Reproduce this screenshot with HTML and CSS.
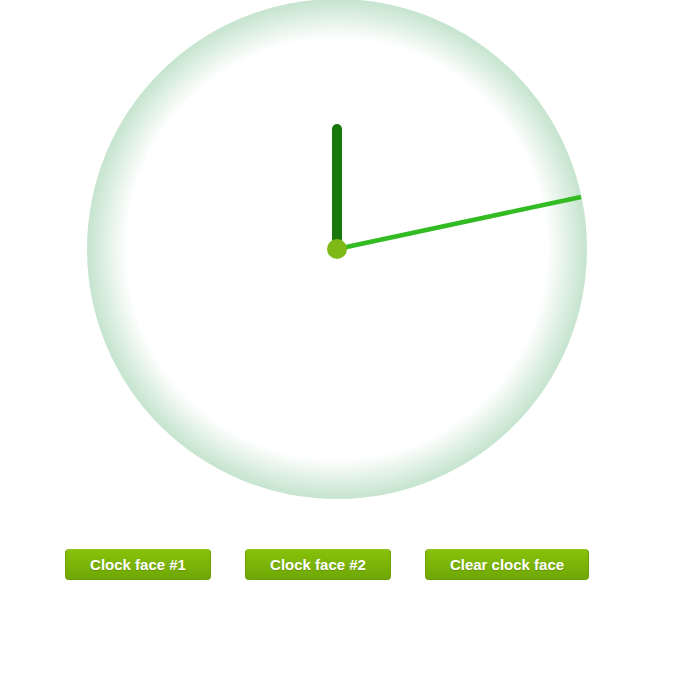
FILE: index.html
```html
<!DOCTYPE html>
<html>
<head>
<meta charset="utf-8">
<link rel="stylesheet" href="styles.css">
</head>
<body>
<div class="page">
  <div class="clock-wrap">
    <svg class="clock" width="500" height="500" viewBox="0 0 500 500">
      <defs>
        <radialGradient id="face" cx="250" cy="250" r="250" gradientUnits="userSpaceOnUse">
          <stop offset="0" stop-color="#ffffff"/>
          <stop offset="0.84" stop-color="#ffffff"/>
          <stop offset="1" stop-color="#c5e4ce"/>
        </radialGradient>
      </defs>
      <circle cx="250" cy="250" r="250" fill="url(#face)"/>
      <line x1="250" y1="250" x2="250" y2="130" stroke="#19780b" stroke-width="10" stroke-linecap="round"/>
      <line x1="250" y1="250" x2="494" y2="198" stroke="#33bb22" stroke-width="4.5"/>
      <circle cx="250" cy="250" r="10" fill="#7dba18"/>
    </svg>
  </div>
  <div class="buttons">
    <button class="btn btn-face">Clock face #1</button>
    <button class="btn btn-face">Clock face #2</button>
    <button class="btn btn-clear">Clear clock face</button>
  </div>
</div>
</body>
</html>
```
FILE: styles.css
```css
html, body {
  margin: 0;
  padding: 0;
  background: #ffffff;
  font-family: "Liberation Sans", Arial, sans-serif;
}
.page {
  width: 675px;
}
.clock-wrap {
  display: flex;
  padding-left: 87px;
  margin-top: -1px;
  height: 500px;
}
.clock {
  display: block;
}
.buttons {
  display: flex;
  gap: 34px;
  padding-left: 65px;
  margin-top: 50px;
}
.btn {
  height: 31px;
  box-sizing: border-box;
  border: 1px solid #6c9f08;
  border-top-color: #8cc41a;
  border-radius: 4px;
  background: linear-gradient(to bottom, #87c10a 0%, #6fa705 100%);
  color: #ffffff;
  font-family: "Liberation Sans", Arial, sans-serif;
  font-weight: bold;
  font-size: 15px;
  padding: 0;
  text-shadow: 0 1px 1px rgba(0, 0, 0, 0.15);
  cursor: pointer;
}
.btn-face {
  width: 146px;
}
.btn-clear {
  width: 164px;
}
```
